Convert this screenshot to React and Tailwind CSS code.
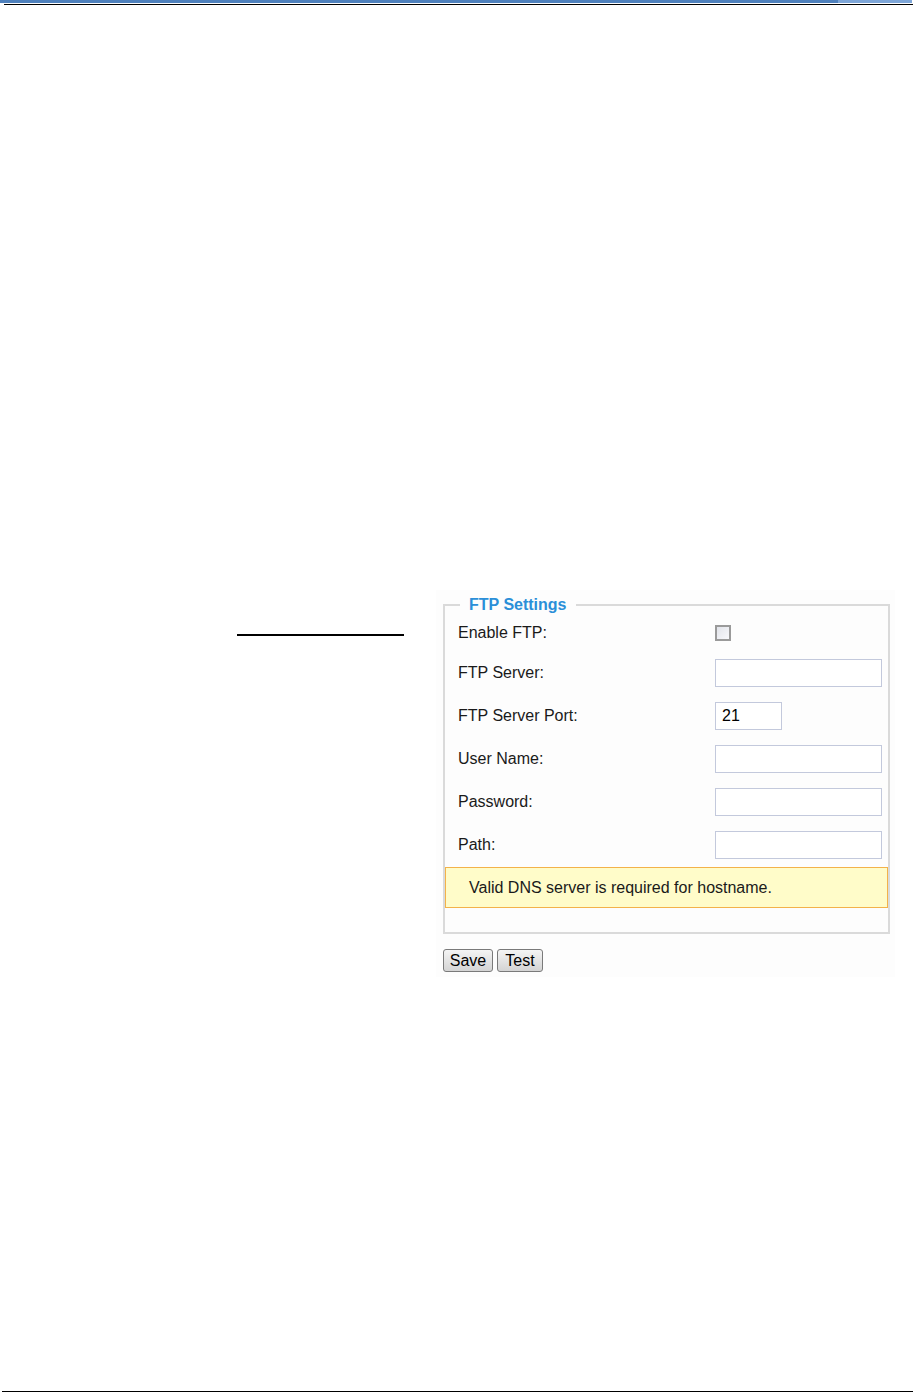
import React from 'react';

const rows = [
  { label: 'FTP Server:', width: 'w-[167px]' },
  { label: 'FTP Server Port:', width: 'w-[67px]', value: '21' },
  { label: 'User Name:', width: 'w-[167px]' },
  { label: 'Password:', width: 'w-[167px]' },
  { label: 'Path:', width: 'w-[167px]' },
];

const Field = ({ label, width, value }) => (
  <div className="flex h-[43px] items-center pl-[13px]">
    <span className="w-[257px] text-[16px] text-[#1a1a1a]">{label}</span>
    <div className={`${width} h-[28px] border border-[#c3c9dc] bg-white flex items-center px-[6px] text-[16px] text-black`}>
      {value}
    </div>
  </div>
);

const Btn = ({ children, w }) => (
  <button className={`${w} h-[23px] rounded-[3px] border border-[#7a7a7a] bg-gradient-to-b from-[#f4f4f4] to-[#d4d4d4] text-[16px] text-black leading-none`}>
    {children}
  </button>
);

export default function App() {
  return (
    <div
      className="w-[915px] h-[1393px] bg-white flex flex-col"
      style={{ fontFamily: '"Liberation Sans", Arial, sans-serif' }}
    >
      {/* page header rule */}
      <div className="flex h-[3px]">
        <div className="w-[838px] bg-[#4f81bd]" />
        <div className="w-[74px] bg-[#7ea6d8]" />
        <div className="flex-1 bg-white" />
      </div>
      <div className="h-[1px]" />
      <div className="ml-[4px] mr-[2px] h-[1px] bg-black" />

      <div className="mt-[585px] flex">
        <div className="pl-[237px] w-[436px]">
          <div className="mt-[44px] w-[167px] h-[2px] bg-black" />
        </div>

        <div className="w-[459px] h-[387px] bg-[#fdfdfd] pl-[7px] pt-[6px]">
          <fieldset className="w-[447px] border-2 border-[#dadada] pb-[24px]">
            <legend className="ml-[15px] px-[9px] text-[16px] font-bold text-[#2b8fd8] leading-[18px]">
              FTP Settings
            </legend>
            <div className="flex h-[37px] items-center pl-[13px]">
              <span className="w-[257px] text-[16px] text-[#1a1a1a]">Enable FTP:</span>
              <div className="w-[16px] h-[16px] border-2 border-[#9a9a9a] bg-gradient-to-br from-[#e2e4ea] to-[#f8f8fb]" />
            </div>
            {rows.map((r) => (
              <Field key={r.label} {...r} />
            ))}
            <div className="mt-[1px] h-[41px] border border-[#f3b24a] bg-[#fffcc9] flex items-center pl-[23px] text-[16px] text-[#1a1a1a]">
              Valid DNS server is required for hostname.
            </div>
          </fieldset>
          <div className="mt-[15px] flex gap-[4px]">
            <Btn w="w-[50px]">Save</Btn>
            <Btn w="w-[46px]">Test</Btn>
          </div>
        </div>
      </div>

      <div className="mt-auto mb-[1px] ml-[2px] mr-[2px] h-[1px] bg-black" />
    </div>
  );
}
